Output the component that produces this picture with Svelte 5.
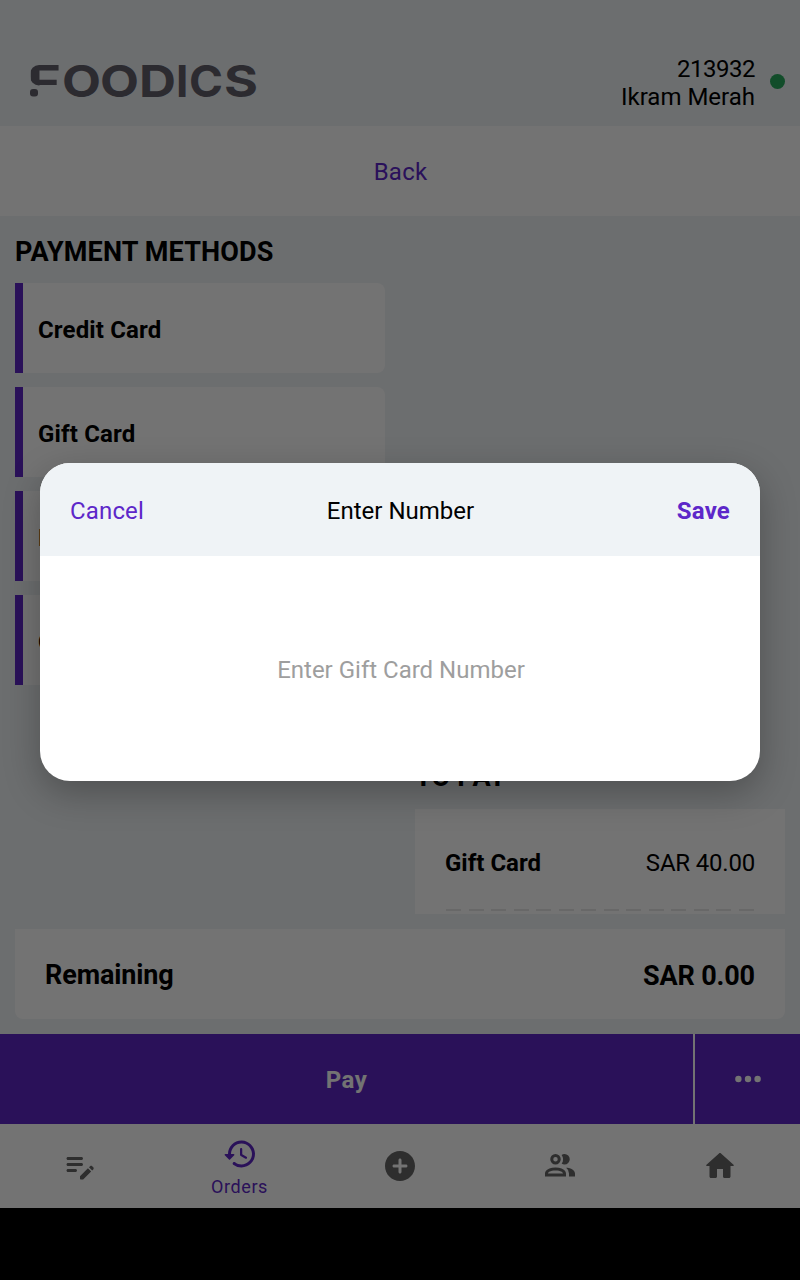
<script lang="ts">
  const methods = ['Credit Card', 'Gift Card', 'House Account', 'Other'];
  const payments = [{ name: 'Gift Card', amount: 'SAR 40.00' }];
  let cardNumber = $state('');
</script>

<div class="app">
  <header class="top-bar">
    <svg class="logo" width="230" height="34" viewBox="0 0 230 34" role="img" aria-label="Foodics">
      <defs>
        <clipPath id="stem"><rect x="0" y="1" width="50" height="20.5" rx="9" /></clipPath>
      </defs>
      <g class="wordmark">
        <text x="-3" y="33" textLength="34" lengthAdjust="spacingAndGlyphs" clip-path="url(#stem)">F</text>
        <text x="32" y="33" textLength="39" lengthAdjust="spacingAndGlyphs">O</text>
        <text x="70" y="33" textLength="39" lengthAdjust="spacingAndGlyphs">O</text>
        <text x="109" y="33" textLength="37" lengthAdjust="spacingAndGlyphs">D</text>
        <text x="146" y="33">I</text>
        <text x="159" y="33" textLength="34" lengthAdjust="spacingAndGlyphs">C</text>
        <text x="194" y="33" textLength="34" lengthAdjust="spacingAndGlyphs">S</text>
      </g>
      <rect class="logo-dot" x="0" y="25" width="8" height="7.5" rx="3" />
    </svg>
    <div class="user">
      <div class="user-text">
        <span class="number">213932</span>
        <span>Ikram Merah</span>
      </div>
      <span class="status"></span>
    </div>
  </header>

  <button class="back">Back</button>

  <main class="content">
    <section class="methods">
      <h2>PAYMENT METHODS</h2>
      {#each methods as method}
        <button class="method">{method}</button>
      {/each}
    </section>
    <section class="to-pay">
      <h2>TO PAY</h2>
      <div class="payments">
        {#each payments as payment}
          <div class="payment">
            <strong>{payment.name}</strong>
            <span class="amount">{payment.amount}</span>
          </div>
          <div class="dashes"></div>
        {/each}
      </div>
    </section>
  </main>

  <div class="remaining">
    <span class="label">Remaining</span>
    <span class="sum">SAR 0.00</span>
  </div>

  <div class="actions">
    <button class="pay">Pay</button>
    <button class="more" aria-label="More">
      <svg width="28" height="8" viewBox="0 0 28 8">
        <circle cx="4.4" cy="4" r="3.2" />
        <circle cx="14" cy="4" r="3.2" />
        <circle cx="23.6" cy="4" r="3.2" />
      </svg>
    </button>
  </div>

  <nav>
    <button aria-label="Edit order">
      <svg width="36" height="36" viewBox="0 0 24 24">
        <path d="M13 12H4c-.55 0-1-.45-1-1s.45-1 1-1h9c.55 0 1 .45 1 1s-.45 1-1 1zM14 7c0-.55-.45-1-1-1H4c-.55 0-1 .45-1 1s.45 1 1 1h9c.55 0 1-.45 1-1zM3 15c0 .55.45 1 1 1h5c.55 0 1-.45 1-1s-.45-1-1-1H4c-.55 0-1 .45-1 1zm15.01-2.13l.71-.71c.39-.39 1.02-.39 1.41 0l.71.71c.39.39.39 1.02 0 1.41l-.71.71-2.12-2.12zm-.71.71l-5.16 5.16c-.09.09-.14.21-.14.35v1.41c0 .28.22.5.5.5h1.41c.13 0 .26-.05.35-.15l5.16-5.16-2.12-2.11z" />
      </svg>
    </button>
    <button class="active">
      <svg width="36" height="36" viewBox="0 0 24 24">
        <path d="M13.26 3C8.17 2.86 4 6.95 4 12H2.21c-.45 0-.67.54-.35.85l2.79 2.8c.2.2.51.2.71 0l2.79-2.8c.31-.31.09-.85-.36-.85H6c0-3.9 3.18-7.05 7.1-7 3.72.05 6.85 3.18 6.9 6.9.05 3.91-3.1 7.1-7 7.1-1.61 0-3.1-.55-4.28-1.48-.4-.31-.96-.28-1.32.08-.42.43-.39 1.13.08 1.5A8.858 8.858 0 0 0 13 21c5.05 0 9.14-4.17 9-9.26-.13-4.69-4.05-8.61-8.74-8.74zm-.51 5c-.41 0-.75.34-.75.75v3.68c0 .35.19.68.49.86l3.12 1.85c.36.21.82.09 1.03-.26.21-.36.09-.82-.26-1.03l-2.88-1.71v-3.4c0-.4-.34-.74-.75-.74z" />
      </svg>
      <span>Orders</span>
    </button>
    <button aria-label="New order">
      <svg width="36" height="36" viewBox="0 0 24 24">
        <path d="M12 2C6.48 2 2 6.48 2 12s4.48 10 10 10 10-4.48 10-10S17.52 2 12 2zm4 11h-3v3c0 .55-.45 1-1 1s-1-.45-1-1v-3H8c-.55 0-1-.45-1-1s.45-1 1-1h3V8c0-.55.45-1 1-1s1 .45 1 1v3h3c.55 0 1 .45 1 1s-.45 1-1 1z" />
      </svg>
    </button>
    <button aria-label="Customers">
      <svg width="36" height="36" viewBox="0 0 24 24">
        <path d="M13.07 10.41A5 5 0 0 0 13.07 4.59A3.39 3.39 0 0 1 15 4A3.5 3.5 0 0 1 15 11A3.39 3.39 0 0 1 13.07 10.41M5.5 7.5A3.5 3.5 0 1 1 9 11A3.5 3.5 0 0 1 5.5 7.5M7.5 7.5A1.5 1.5 0 1 0 9 6A1.5 1.5 0 0 0 7.5 7.5M16 17V19H2V17S2 13 9 13 16 17 16 17M14 17C13.86 16.22 12.67 15 9 15S4.07 16.31 4 17M15.95 13A5.32 5.32 0 0 1 18 17V19H22V17S22 13.37 15.94 13Z" />
      </svg>
    </button>
    <button aria-label="Home">
      <svg width="36" height="36" viewBox="0 0 24 24">
        <path d="M10 19v-5h4v5c0 .55.45 1 1 1h3c.55 0 1-.45 1-1v-7h1.7c.46 0 .68-.57.33-.87L12.67 3.6c-.38-.34-.96-.34-1.34 0l-8.36 7.53c-.34.3-.13.87.33.87H5v7c0 .55.45 1 1 1h3c.55 0 1-.45 1-1z" />
      </svg>
    </button>
  </nav>
</div>

<div class="backdrop">
  <div class="modal" role="dialog" aria-label="Enter Number">
    <div class="modal-header">
      <button class="cancel">Cancel</button>
      <span class="title">Enter Number</span>
      <button class="save">Save</button>
    </div>
    <div class="modal-body">
      <input type="text" placeholder="Enter Gift Card Number" bind:value={cardNumber} />
    </div>
  </div>
</div>

<style>
  :global(body) {
    background: #000;
    font-family: Roboto, sans-serif;
    font-size: 24px;
    overflow: hidden;
  }

  button {
    border: 0;
    margin: 0;
    padding: 0;
    background: none;
    color: inherit;
    font: inherit;
  }

  .app {
    display: flex;
    flex-direction: column;
    height: 1208px;
    background: #eff3f6;
    color: #000;
  }

  .top-bar {
    display: flex;
    justify-content: space-between;
    box-sizing: border-box;
    height: 126px;
    padding: 55px 15px 0 30px;
  }

  .logo {
    margin-top: 9px;
    overflow: visible;
  }

  .wordmark {
    fill: #62606b;
    font-family: Inter, sans-serif;
    font-size: 44px;
    font-weight: 700;
  }

  .logo-dot {
    fill: #62606b;
  }

  .user {
    display: flex;
    align-items: flex-start;
    gap: 15px;
    line-height: 28px;
  }

  .user-text {
    display: flex;
    flex-direction: column;
    align-items: flex-end;
  }

  .number {
    letter-spacing: -0.5px;
  }

  .status {
    width: 15px;
    height: 15px;
    margin-top: 19px;
    border-radius: 50%;
    background: #28ab5d;
  }

  .back {
    height: 90px;
    padding: 2px 0 0 1px;
    background: #fff;
    color: #5d27c9;
    letter-spacing: 0.2px;
  }

  .content {
    flex: 1;
    display: grid;
    grid-template-columns: 370px 370px;
    gap: 30px;
    padding: 0 15px;
  }

  h2 {
    margin: 0;
    font-size: 27px;
    font-weight: 700;
    letter-spacing: 0.15px;
    line-height: 32px;
  }

  .methods {
    display: flex;
    flex-direction: column;
    gap: 14px;
    padding-top: 20px;
  }

  .methods h2 {
    margin-bottom: 1px;
  }

  .method {
    height: 90px;
    padding: 3px 15px 0;
    border-left: 8px solid #5d27c6;
    border-radius: 0 8px 8px 0;
    background: #fff;
    font-weight: 700;
    letter-spacing: 0.15px;
    text-align: left;
  }

  .to-pay {
    display: flex;
    flex-direction: column;
    justify-content: flex-end;
    padding-bottom: 15px;
  }

  .to-pay h2 {
    margin-bottom: 16px;
  }

  .payments {
    box-sizing: border-box;
    height: 105px;
    padding: 0 30px;
    background: #fff;
  }

  .payment {
    display: flex;
    align-items: center;
    justify-content: space-between;
    height: 100px;
    padding-top: 8px;
    box-sizing: border-box;
  }

  .amount {
    letter-spacing: -0.2px;
  }

  .dashes {
    height: 2px;
    margin-left: 1px;
    background: repeating-linear-gradient(90deg, #e6e6e6 0 15px, transparent 15px 22.5px);
  }

  .remaining {
    display: flex;
    align-items: center;
    justify-content: space-between;
    height: 90px;
    margin: 0 15px 15px;
    padding: 3px 30px 0;
    box-sizing: border-box;
    border-radius: 0 0 8px 8px;
    background: #fff;
    font-size: 27px;
    font-weight: 700;
    letter-spacing: -0.12px;
  }

  .label {
    padding-bottom: 2px;
  }

  .actions {
    display: grid;
    grid-template-columns: 693px 1fr;
    gap: 2px;
    height: 90px;
    background: #fff;
  }

  .pay,
  .more {
    background: #5d27c6;
    color: #fff;
    font-weight: 700;
  }

  .pay {
    padding-top: 2px;
    letter-spacing: 0.4px;
  }

  .more svg {
    display: block;
    margin: 0 auto;
    fill: #fff;
  }

  nav {
    display: grid;
    grid-template-columns: repeat(5, 1fr);
    height: 84px;
    background: #fff;
    color: #666;
  }

  nav button {
    display: flex;
    flex-direction: column;
    align-items: center;
    justify-content: center;
  }

  nav svg {
    fill: currentColor;
  }

  nav .active {
    padding-top: 2px;
    color: #5d27c6;
    font-size: 18px;
    letter-spacing: 0.6px;
    line-height: 24px;
  }

  .active span {
    margin: 3px 1px 0 0;
  }

  .backdrop {
    position: absolute;
    top: 0;
    left: 0;
    display: flex;
    align-items: flex-start;
    justify-content: center;
    box-sizing: border-box;
    width: 800px;
    height: 1280px;
    padding-top: 463px;
    background: rgba(0, 0, 0, 0.55);
  }

  .modal {
    width: 720px;
    height: 318px;
    border-radius: 30px;
    overflow: hidden;
    background: #fff;
    box-shadow: 0 12px 36px rgba(0, 0, 0, 0.27);
  }

  .modal-header {
    display: grid;
    grid-template-columns: 1fr auto 1fr;
    align-items: center;
    box-sizing: border-box;
    height: 93px;
    padding: 3px 30px 0;
    background: #eff3f6;
  }

  .title {
    padding-left: 1px;
  }

  .cancel {
    color: #5d27c9;
    letter-spacing: 0.15px;
    text-align: left;
  }

  .save {
    color: #5d27c9;
    font-weight: 700;
    letter-spacing: 0.2px;
    text-align: right;
  }

  .modal-body {
    display: flex;
    align-items: center;
    height: 225px;
  }

  input {
    width: 100%;
    padding: 2px 0 0 2px;
    border: 0;
    outline: 0;
    background: none;
    font: inherit;
    text-align: center;
  }

  input::placeholder {
    color: #9e9e9e;
  }
</style>
